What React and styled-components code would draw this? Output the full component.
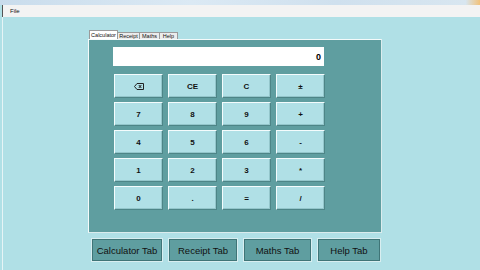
import styled, { createGlobalStyle } from "styled-components";

const Global = createGlobalStyle`
*{box-sizing:border-box;}
html,body{margin:0;padding:0;}
body{
  width:480px;
  height:270px;
  overflow:hidden;
  background:#b0e0e6;
  font-family:"Liberation Sans", Arial, sans-serif;
}
`

const Window = styled.div`
width:480px;
height:270px;
display:flex;
flex-direction:column;
background:#b0e0e6;
`

const TitleBar = styled.div`
height:5px;
background:linear-gradient(90deg,#c9dcec 0%,#dbe9f4 40%,#cfe0ee 70%,#d8e6f0 97%,#f2c27a 100%);
`

const MenuBar = styled.div`
height:12px;
display:flex;
align-items:center;
padding-left:7px;
background:#f3f3f3;
border-left:1px solid #555;
margin-left:2px;
font-size:6px;
color:#111;
`

const Client = styled.div`
flex:1;
display:flex;
flex-direction:column;
padding:13px 0 0 85px;
border-left:1px solid #e6f4f6;
margin-left:2px;
`

const TabControl = styled.div`
width:294px;
display:flex;
flex-direction:column;
`

const TabStrip = styled.div`
height:9px;
display:flex;
align-items:flex-end;
padding-left:1px;
`

const Tab = styled.div`
height:${p => p.$active ? "9px" : "7px"};
width:${p => p.$w}px;
display:flex;
align-items:center;
justify-content:center;
font-size:5.5px;
color:#111;
background:${p => p.$active ? "#ffffff" : "#ececec"};
border:1px solid #9a9a9a;
border-bottom:none;
margin-right:-1px;
z-index:${p => p.$active ? 1 : 0};
`

const TabPage = styled.div`
height:194px;
background:#5f9ea0;
border:1px solid #f4fafa;
border-right-color:#dbeced;
border-bottom-color:#dbeced;
padding:7px 0 0 24px;
display:flex;
flex-direction:column;
gap:8px;
`

const Display = styled.div`
width:211px;
height:19px;
background:#fff;
display:flex;
align-items:center;
justify-content:flex-end;
padding-right:3px;
font-size:9px;
font-weight:bold;
color:#000;
`

const Keypad = styled.div`
display:grid;
grid-template-columns:repeat(4,49px);
grid-auto-rows:24px;
column-gap:5px;
row-gap:4px;
margin-left:1px;
`

const Key = styled.button`
margin:0;
padding:0;
font-family:"Liberation Sans", Arial, sans-serif;
font-size:8px;
font-weight:bold;
color:#111;
background:#b0e0e6;
border:1px solid;
border-color:#f4fcfd #4d8587 #4d8587 #f4fcfd;
box-shadow:inset -1px -1px 0 #93c6cb;
display:flex;
align-items:center;
justify-content:center;
`

const BottomBar = styled.div`
display:flex;
gap:5px;
margin:5px 0 0 3px;
`

const TabButton = styled.button`
width:${p => p.$w}px;
height:24px;
margin:0;
padding:0;
font-family:"Liberation Sans", Arial, sans-serif;
font-size:9.5px;
color:#111;
background:#5f9ea0;
border:1px solid #d8eef0;
box-shadow:inset 0 0 0 1px #3f7577;
`

function BackIcon(){
    return (
        <svg width="10" height="7" viewBox="0 0 10 7">
            <path d="M3 0.5H9.5V6.5H3L0.5 3.5Z" fill="none" stroke="#222" strokeWidth="1"/>
            <path d="M4.8 2L7.3 5M7.3 2L4.8 5" stroke="#222" strokeWidth="1"/>
        </svg>
    )
}

const keys = [
    "back","CE","C","±",
    "7","8","9","+",
    "4","5","6","-",
    "1","2","3","*",
    "0",".","=","/"
];

const tabs = [
    {label:"Calculator", w:29, active:true},
    {label:"Receipt", w:23},
    {label:"Maths", w:21},
    {label:"Help", w:19},
];

const bottom = [
    {label:"Calculator Tab", w:72},
    {label:"Receipt Tab", w:70},
    {label:"Maths Tab", w:69},
    {label:"Help Tab", w:64},
];

export default function App(){
    return (
        <>
            <Global/>
            <Window>
                <TitleBar/>
                <MenuBar>File</MenuBar>
                <Client>
                    <TabControl>
                        <TabStrip>
                            {tabs.map(t => (
                                <Tab key={t.label} $w={t.w} $active={t.active}>{t.label}</Tab>
                            ))}
                        </TabStrip>
                        <TabPage>
                            <Display>0</Display>
                            <Keypad>
                                {keys.map(k => (
                                    <Key key={k}>{k === "back" ? <BackIcon/> : k}</Key>
                                ))}
                            </Keypad>
                        </TabPage>
                    </TabControl>
                    <BottomBar>
                        {bottom.map(b => (
                            <TabButton key={b.label} $w={b.w}>{b.label}</TabButton>
                        ))}
                    </BottomBar>
                </Client>
            </Window>
        </>
    )
}
